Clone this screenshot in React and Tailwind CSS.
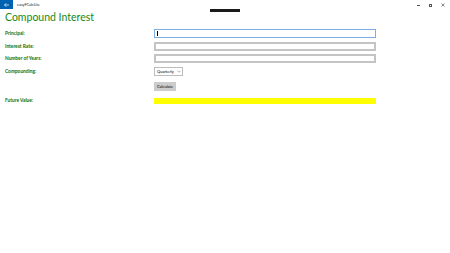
import React, { useState } from "react";

const App = () => {
    const [freq, setFreq] = useState("Quarterly");

    return (
        <div className="w-[450px] h-[253px] bg-white overflow-hidden" style={{ fontFamily: 'Lato, "Liberation Sans", sans-serif' }}>
            {/* title bar */}
            <div className="relative flex items-center h-[10px]">
                <div className="w-[13px] h-[9px] self-start bg-[#0063b1] flex items-center justify-center">
                    <svg width="5" height="4" viewBox="0 0 10 8" fill="none" stroke="white" strokeWidth="1.4">
                        <path d="M10 4H1M4.5 0.5L1 4l3.5 3.5" />
                    </svg>
                </div>
                <span className="ml-[4px] text-[3.8px] leading-none text-[#222]">easyFCalcLite</span>
                <div className="absolute left-[210px] top-[9px] w-[30px] h-[3px] bg-[#1a1a1a]" />
                <div className="ml-auto flex items-center gap-[9px] pr-[5px]">
                    <div className="w-[3px] h-px bg-[#555]" />
                    <div className="w-[3px] h-[3px] border border-[#555]" />
                    <svg width="4" height="4" viewBox="0 0 4 4" stroke="#555" strokeWidth="0.7">
                        <path d="M0.5 0.5l3 3M3.5 0.5l-3 3" />
                    </svg>
                </div>
            </div>

            <div className="pl-[5px]">
                <h1 className="text-[10.5px] leading-[14px] text-[#148a14]">Compound Interest</h1>

                <div className="grid grid-cols-[149px_222px] items-center text-[4.8px] font-bold text-[#0a720a] mt-[5px]">
                    <label>Principal:</label>
                    <div className="h-[9px] border border-[#7eaee0] bg-white flex items-center pl-[2px]">
                        <div className="w-px h-[5px] bg-black" />
                    </div>

                    <label className="mt-[4px]">Interest Rate:</label>
                    <div className="mt-[4px] h-[9px] border-2 border-[#c4c4c4] bg-white" />

                    <label className="mt-[3px]">Number of Years:</label>
                    <div className="mt-[3px] h-[9px] border-2 border-[#c4c4c4] bg-white" />

                    <label className="mt-[4px]">Compounding:</label>
                    <div className="mt-[4px]">
                        <div className="w-[29px] h-[9px] border border-[#bdbdbd] flex items-center gap-[3px] pl-[2px] font-normal text-black">
                            <span className="text-[4px] leading-none">{freq}</span>
                            <svg width="4" height="3" viewBox="0 0 8 5" fill="none" stroke="#666" strokeWidth="1">
                                <path d="M0.5 0.5L4 4l3.5-3.5" />
                            </svg>
                        </div>
                    </div>

                    <div className="mt-[6px]" />
                    <div className="mt-[6px]">
                        <button
                            onClick={() => setFreq(freq)}
                            className="w-[22px] h-[9px] bg-[#cccccc] flex items-center justify-center font-normal text-black text-[4px] leading-none">
                            Calculate
                        </button>
                    </div>

                    <label className="mt-[6px]">Future Value:</label>
                    <div className="mt-[6px] h-[6px] bg-[#ffff00]" />
                </div>
            </div>
        </div>
    );
};

export default App;
